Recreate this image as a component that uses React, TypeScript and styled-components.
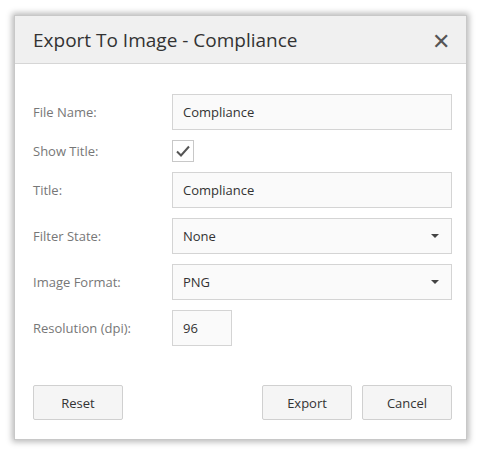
import React from "react";
import styled, { createGlobalStyle } from "styled-components";

const Global = createGlobalStyle`
  body { margin: 0; background: #fff; font-family: "Open Sans", "Noto Sans", sans-serif; }
`;
const Page = styled.div`width:481px;height:454px;padding:15px 14px 14px 14px;box-sizing:border-box;`;
const Dialog = styled.div`
  width:453px;height:425px;background:#fff;border:1px solid #c8c8c8;box-sizing:border-box;
  box-shadow:0 0 6px 2px rgba(0,0,0,0.28);display:flex;flex-direction:column;
`;
const Header = styled.div`
  height:48px;background:#f0f0f0;border-bottom:1px solid #d6d6d6;display:flex;align-items:center;
  justify-content:space-between;padding:0 16px 0 18px;box-sizing:border-box;flex-shrink:0;
`;
const Title = styled.div`font-size:19px;color:#333;`;
const Close = styled.div`font-size:22px;color:#555;line-height:1;`;
const Body = styled.div`padding:30px 14px 0 18px;display:flex;flex-direction:column;gap:10px;flex:1;`;
const Row = styled.div<{ h: number }>`display:flex;align-items:center;height:${p => p.h}px;`;
const Label = styled.div`width:139px;font-size:13px;color:#777;`;
const Input = styled.div<{ w?: number }>`
  width:${p => (p.w ? p.w + "px" : "280px")};height:36px;box-sizing:border-box;border:1px solid #d4d4d4;
  background:#fafafa;font-size:13px;color:#333;display:flex;align-items:center;padding:0 10px;
  justify-content:space-between;
`;
const Check = styled.div`width:22px;height:22px;box-sizing:border-box;border:1px solid #c8c8c8;display:flex;align-items:center;justify-content:center;`;
const Caret = styled.div`width:0;height:0;border-left:4px solid transparent;border-right:4px solid transparent;border-top:4px solid #444;margin-right:2px;`;
const Footer = styled.div`display:flex;padding:0 14px 19px 18px;gap:10px;`;
const Btn = styled.div`
  width:90px;height:35px;box-sizing:border-box;border:1px solid #d0d0d0;border-radius:2px;background:#f5f5f5;
  display:flex;align-items:center;justify-content:center;font-size:13px;color:#333;
`;
const Spacer = styled.div`flex:1;`;

export default function App() {
  return (
    <Page>
      <Global />
      <Dialog>
        <Header><Title>Export To Image - Compliance</Title><Close>✕</Close></Header>
        <Body>
          <Row h={36}><Label>File Name:</Label><Input>Compliance</Input></Row>
          <Row h={22}><Label>Show Title:</Label><Check>
            <svg width="16" height="14" viewBox="0 0 16 14"><path d="M2 7.5 L6 11.5 L14 2.5" fill="none" stroke="#555" strokeWidth="2"/></svg>
          </Check></Row>
          <Row h={36}><Label>Title:</Label><Input>Compliance</Input></Row>
          <Row h={36}><Label>Filter State:</Label><Input>None<Caret /></Input></Row>
          <Row h={36}><Label>Image Format:</Label><Input>PNG<Caret /></Input></Row>
          <Row h={36}><Label>Resolution (dpi):</Label><Input w={60}>96</Input></Row>
        </Body>
        <Footer><Btn>Reset</Btn><Spacer /><Btn>Export</Btn><Btn>Cancel</Btn></Footer>
      </Dialog>
    </Page>
  );
}
